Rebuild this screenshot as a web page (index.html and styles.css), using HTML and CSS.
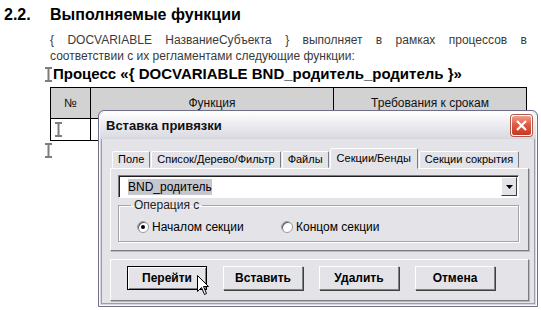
FILE: index.html
```html
<!DOCTYPE html>
<html lang="ru">
<head>
  <meta charset="UTF-8">
  <title>Выполняемые функции</title>
  <link rel="stylesheet" href="styles.css">
</head>
<body>

  <div class="doc">
    <h2 class="section"><span class="num">2.2.</span>Выполняемые функции</h2>

    <p class="lead">
      <span class="line-full">{ DOCVARIABLE НазваниеСубъекта } выполняет в рамках процессов в</span>
      <span class="line-last">соответствии с их регламентами следующие функции:</span>
    </p>

    <h3 class="process">
      <svg class="ibeam" width="7" height="15" viewBox="0 0 7 15"><path d="M0 1H7M0 14H7M3.5 1V14" /></svg>Процесс «{ DOCVARIABLE BND_родитель_родитель }»
    </h3>

    <table class="func-table">
      <thead>
        <tr>
          <th class="col-num">№</th>
          <th class="col-func">Функция</th>
          <th>Требования к срокам</th>
        </tr>
      </thead>
      <tbody>
        <tr>
          <td><svg class="ibeam" width="7" height="15" viewBox="0 0 7 15"><path d="M0 1H7M0 14H7M3.5 1V14" /></svg></td>
          <td></td>
          <td></td>
        </tr>
      </tbody>
    </table>

    <div class="after-table">
      <svg class="ibeam" width="7" height="15" viewBox="0 0 7 15"><path d="M0 1H7M0 14H7M3.5 1V14" /></svg>
    </div>
  </div>

  <!-- диалог поверх документа -->
  <div class="dialog">
    <div class="titlebar">
      <span class="title">Вставка привязки</span>
      <span class="close-btn">
        <svg width="13" height="13" viewBox="0 0 13 13"><path d="M2 2L11 11M11 2L2 11" /></svg>
      </span>
    </div>

    <div class="dialog-body">
      <div class="tabs">
        <span class="tab">Поле</span>
        <span class="tab">Список/Дерево/Фильтр</span>
        <span class="tab">Файлы</span>
        <span class="tab active">Секции/Бенды</span>
        <span class="tab">Секции сокрытия</span>
      </div>

      <div class="tab-panel">
        <div class="combo">
          <span class="combo-value"><span class="selected-text">BND_родитель</span></span>
          <span class="combo-arrow">
            <svg width="7" height="4" viewBox="0 0 7 4"><path d="M0 0H7L3.5 4Z" /></svg>
          </span>
        </div>

        <fieldset class="group">
          <legend>Операция с</legend>
          <div class="radios">
            <label class="radio-item radio-first"><span class="radio checked"></span>Началом секции</label>
            <label class="radio-item"><span class="radio"></span>Концом секции</label>
          </div>
        </fieldset>
      </div>

      <div class="button-panel">
        <span class="btn focused">Перейти</span>
        <span class="btn">Вставить</span>
        <span class="btn">Удалить</span>
        <span class="btn">Отмена</span>
      </div>
    </div>
  </div>

  <svg class="pointer" width="13" height="21" viewBox="0 0 13 21">
    <path d="M0.5 0.5V16.5L4.5 12.5L7.5 19.5L9.5 18.5L6.5 11.5H11.5Z" />
  </svg>

</body>
</html>
```

FILE: styles.css
```css
* {
  box-sizing: border-box;
}

body {
  margin: 0;
  background: #fff;
  font-family: 'Liberation Sans', Arial, sans-serif;
  color: #000;
  width: 541px;
  height: 310px;
  overflow: hidden;
  position: relative;
}

.doc {
  padding: 5px 14px 0 4px;
}

.section {
  display: flex;
  margin: 0;
  font-size: 16px;
  line-height: 20px;
  font-weight: bold;
}

.section .num {
  width: 46px;
}

.lead {
  margin: 7px 0 0 46px;
  font-size: 12px;
  line-height: 16px;
  color: #3a3a3a;
}

.line-full {
  display: block;
  text-align: justify;
  text-align-last: justify;
}

.line-last {
  display: block;
}

.process {
  display: flex;
  align-items: center;
  margin: 1px 0 0 41px;
  font-size: 15px;
  line-height: 18px;
  font-weight: bold;
}

.process .ibeam {
  margin-right: 1px;
}

.ibeam path {
  fill: none;
  stroke: #7d7d7d;
  stroke-width: 2;
}

.func-table {
  margin: 4px 0 0 46px;
  width: 477px;
  border-collapse: collapse;
  font-size: 12px;
}

.func-table th,
.func-table td {
  border: 1px solid #000;
  padding: 0;
}

.func-table th {
  height: 31px;
  background: #d2d2d2;
  font-weight: normal;
  color: #111;
}

.func-table td {
  height: 22px;
  padding-left: 4px;
  vertical-align: bottom;
}

.func-table .ibeam {
  display: block;
  margin-bottom: 3px;
}

.col-num {
  width: 40px;
}

.col-func {
  width: 243px;
}

.after-table {
  margin: 2px 0 0 41px;
  height: 15px;
}

.after-table .ibeam {
  display: block;
}

/* диалог */

.dialog {
  position: absolute;
  left: 98px;
  top: 110px;
  width: 440px;
  height: 197px;
  background: #e3e3e8;
  border: 1px solid #6e6e88;
  border-radius: 6px 6px 0 0;
  box-shadow: inset 0 0 0 1px #fbfbfd, inset 0 0 0 2px #d6d6de, inset 0 0 0 3px #9d9db2;
  font-size: 12px;
  color: #000;
}

.titlebar {
  display: flex;
  align-items: center;
  height: 27px;
  padding: 0 4px 0 6px;
  border-radius: 5px 5px 0 0;
  background: linear-gradient(to bottom, #ffffff, #ececf1 45%, #dadae2);
  border-bottom: 1px solid #d6d6de;
  margin: 1px 1px 0;
}

.title {
  font-size: 13px;
  font-weight: bold;
  color: #111;
}

.close-btn {
  margin-left: auto;
  width: 21px;
  height: 21px;
  display: flex;
  align-items: center;
  justify-content: center;
  border: 1px solid #fff;
  border-radius: 3px;
  background: linear-gradient(to bottom, #f0a090, #dd5b45 45%, #c23a26);
  box-shadow: 0 0 0 1px #b05a4a;
}

.close-btn path {
  stroke: #fff;
  stroke-width: 2.2;
  fill: none;
}

.dialog-body {
  padding: 6px 8px 0 11px;
}

.tabs {
  display: flex;
  align-items: flex-end;
  height: 23px;
  padding-left: 2px;
  position: relative;
  z-index: 1;
  font-size: 11px;
}

.tab {
  height: 17px;
  line-height: 15px;
  padding: 0 5px;
  margin-right: 1px;
  border: 1px solid;
  border-color: #fff #7c7c84 transparent #fff;
  border-radius: 2px 2px 0 0;
  background: #e3e3e8;
  white-space: nowrap;
}

.tab.active {
  height: 21px;
  line-height: 18px;
  margin-bottom: -1px;
  padding: 0 6px;
}

.tab-panel {
  height: 83px;
  border: 1px solid;
  border-color: #fff #7c7c84 #7c7c84 #fff;
  box-shadow: 1px 1px 0 #b8b8c0;
  padding: 6px 9px 0 7px;
}

.combo {
  display: flex;
  height: 23px;
  background: #fff;
  border: 1px solid;
  border-color: #7c7c84 #fff #fff #7c7c84;
  box-shadow: inset 1px 1px 0 #202020;
}

.combo-value {
  flex: 1;
  padding: 4px 0 0 9px;
}

.selected-text {
  background: #c6c6ce;
  padding: 1px 0;
}

.combo-arrow {
  width: 16px;
  margin: 1px 1px 1px 0;
  display: flex;
  align-items: center;
  justify-content: center;
  background: #e3e3e8;
  border: 1px solid;
  border-color: #fff #404040 #404040 #fff;
}

.combo-arrow path {
  fill: #000;
}

.group {
  margin: 1px 0 0;
  padding: 0;
  height: 43px;
  border: 1px solid #a4a4ac;
  box-shadow: 1px 1px 0 #fff, inset 1px 1px 0 #fff;
}

.group legend {
  margin-left: 12px;
  padding: 0 3px;
  line-height: 12px;
  color: #222;
}

.radios {
  display: flex;
  padding: 9px 0 0 18px;
}

.radio-item {
  display: flex;
  align-items: center;
  gap: 3px;
}

.radio-first {
  width: 144px;
}

.radio {
  width: 12px;
  height: 12px;
  border-radius: 50%;
  background: #fff;
  border: 1px solid #9a9aa2;
  box-shadow: inset 1px 1px 0 #5a5a5a;
  position: relative;
}

.radio.checked::after {
  content: "";
  position: absolute;
  left: 3px;
  top: 3px;
  width: 4px;
  height: 4px;
  border-radius: 50%;
  background: #000;
}

.button-panel {
  display: flex;
  gap: 16px;
  height: 42px;
  margin-top: 8px;
  padding: 6px 0 0 16px;
  border: 1px solid;
  border-color: #fff #7c7c84 #7c7c84 #fff;
  box-shadow: 1px 1px 0 #b8b8c0;
}

.btn {
  width: 80px;
  height: 24px;
  display: flex;
  align-items: center;
  justify-content: center;
  font-weight: bold;
  background: #e3e3e8;
  border: 1px solid;
  border-color: #fff #808088 #808088 #fff;
  box-shadow: 1px 1px 0 #404040;
}

.btn.focused {
  border-color: #000;
  box-shadow: inset 1px 1px 0 #fff, inset -1px -1px 0 #808088;
}

.pointer {
  position: absolute;
  left: 197px;
  top: 275px;
}

.pointer path {
  fill: #fff;
  stroke: #000;
  stroke-width: 1;
}
```
